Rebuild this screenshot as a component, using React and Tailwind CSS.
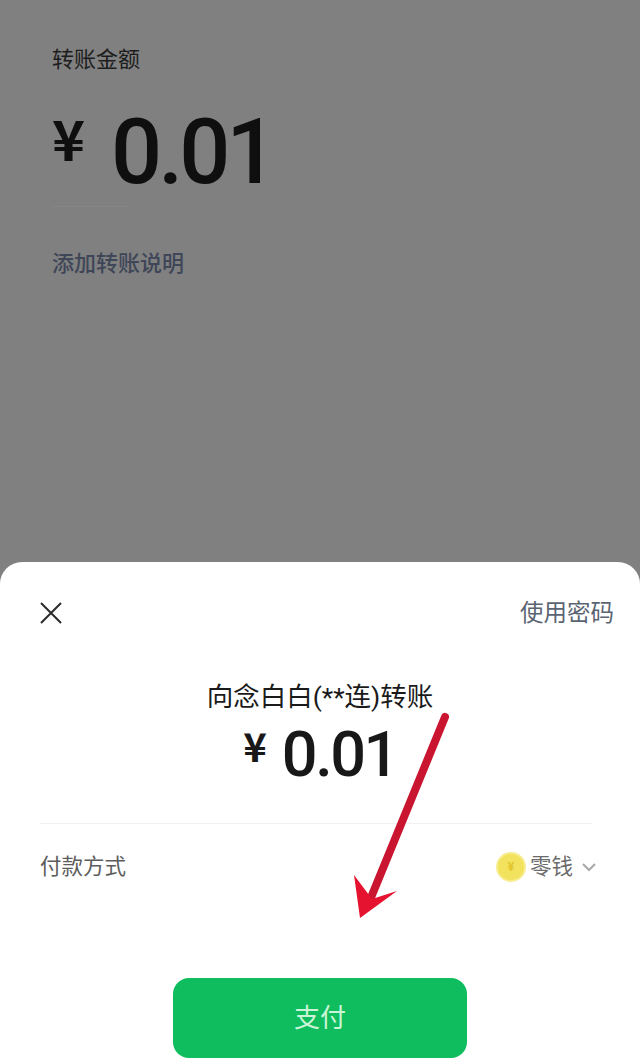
import React from 'react';

const cjk = "font-['Roboto','Noto_Sans_CJK_SC',sans-serif]";

const App = () => {
  return (
    <div className={`relative w-[640px] h-[1063px] overflow-hidden bg-[#808080] flex flex-col ${cjk}`}>
      {/* Transfer page under the dim layer */}
      <div className="h-[562px] shrink-0 pl-[52px] pt-[43px]">
        <div className="text-[22px] leading-[34px] text-[#1d1d1d]">转账金额</div>
        <div className="mt-[31px] flex items-start h-[90px] text-[#0f0f0f]">
          <span className="mt-[4px] w-[59px] text-[56px] leading-[50px] font-bold font-['Noto_Sans_CJK_SC',sans-serif]">¥</span>
          <span className="text-[90px] leading-[90px] font-medium tracking-[-4px]">0.01</span>
        </div>
        <div className="mt-[8px] h-px w-[76px] bg-[#858585]"></div>
        <div className="mt-[40px] text-[22px] leading-[34px] font-medium text-[#3e4657]">添加转账说明</div>
      </div>

      {/* Payment sheet */}
      <div className="flex-1 bg-white rounded-t-[22px] flex flex-col px-[40px]">
        <div className="flex items-center justify-between mt-[33px] h-[36px]">
          <svg width="24" height="24" viewBox="0 0 24 24" fill="none" stroke="#2a2a2a" strokeWidth="2" className="ml-[-1px]">
            <path d="M2 2 L22 22 M22 2 L2 22" />
          </svg>
          <span className="mr-[-14px] text-[23.5px] leading-[36px] text-[#5a6472]">使用密码</span>
        </div>
        <div className="mt-[48px] text-center text-[26.5px] leading-[36px] text-[#1a1a1a]">向念白白(**连)转账</div>
        <div className="mt-[7px] h-[66px] flex items-start justify-center text-[#181818]">
          <span className="mt-[3px] mr-[15px] text-[40px] leading-[40px] font-bold font-['Noto_Sans_CJK_SC',sans-serif]">¥</span>
          <span className="text-[63px] leading-[66px] font-medium tracking-[-2.5px]">0.01</span>
        </div>
        <div className="mt-[35px] h-px w-[552px] bg-[#f1f1f1]"></div>
        <div className="mt-[15px] h-[56px] flex items-center justify-between">
          <span className="text-[21.5px] text-[#5d5d5d]">付款方式</span>
          <div className="flex items-center mr-[4px]">
            <div className="w-[30px] h-[30px] rounded-full bg-[#f2e25e] border-2 border-[#f7ec8e] flex items-center justify-center text-[12px] font-bold text-[#e3c52c]">¥</div>
            <span className="ml-[4px] text-[21.5px] text-[#6b6b6b]">零钱</span>
            <svg width="14" height="9" viewBox="0 0 14 9" fill="none" stroke="#a8a8a8" strokeWidth="2" className="ml-[9px]">
              <path d="M1 1 L7 7 L13 1" />
            </svg>
          </div>
        </div>
        <div className="mt-[83px] mx-auto w-[294px] h-[80px] shrink-0 rounded-[16px] bg-[#0fbd5f] flex items-center justify-center text-[26px] text-[#c9f5d6]">支付</div>
      </div>

      {/* Red annotation arrow drawn over the sheet */}
      <svg className="absolute left-[350px] top-[705px]" width="110" height="225" viewBox="0 0 110 225" fill="none">
        <path d="M95 12 L20 195" stroke="#c9152f" strokeWidth="8" strokeLinecap="round" />
        <path d="M4 170 L10 213 L47 186 L22 194 Z" fill="#e5132f" />
      </svg>
    </div>
  );
};

export default App;
